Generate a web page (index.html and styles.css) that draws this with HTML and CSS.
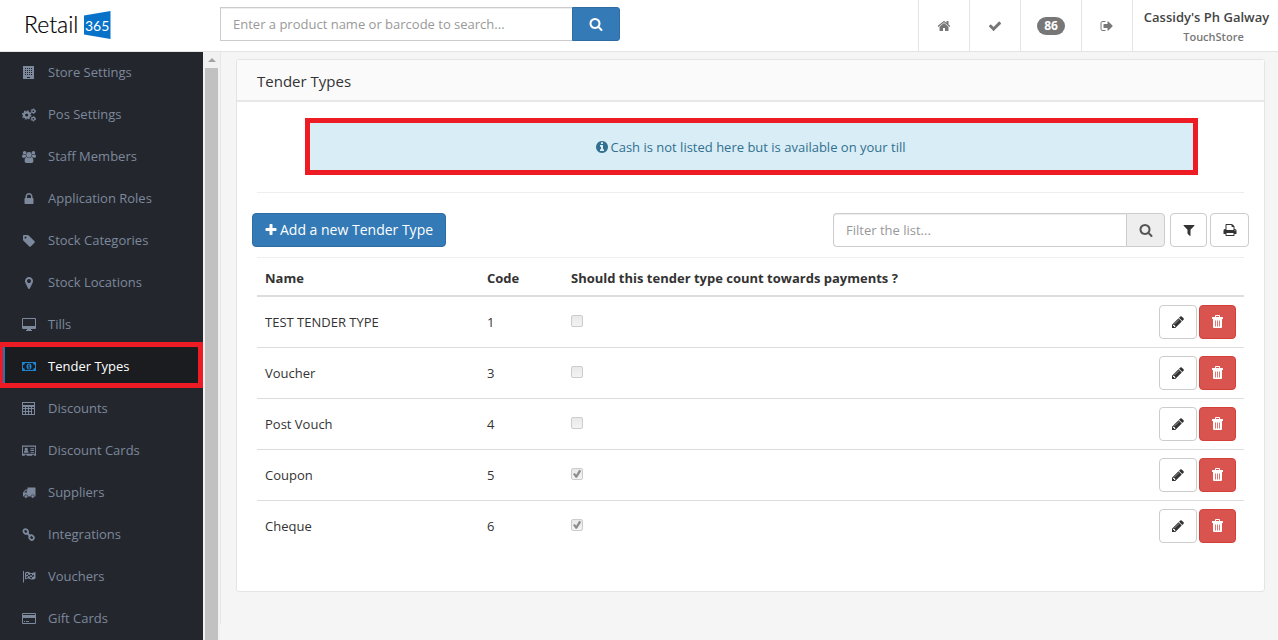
FILE: index.html
```html
<!DOCTYPE html>
<html lang="en">
<head>
<meta charset="utf-8">
<meta name="viewport" content="width=device-width, initial-scale=1">
<title>Tender Types</title>
<link rel="stylesheet" href="styles.css">
</head>
<body>
<svg class="sprite" aria-hidden="true">
  <symbol id="search" viewBox="0 0 1792 1792"><path d="M1216 832q0-185-131.5-316.5t-316.5-131.5-316.5 131.5-131.5 316.5 131.5 316.5 316.5 131.5 316.5-131.5 131.5-316.5zm512 832q0 52-38 90t-90 38q-54 0-90-38l-343-342q-179 124-399 124-143 0-273.5-55.5t-225-150-150-225-55.5-273.5 55.5-273.5 150-225 225-150 273.5-55.5 273.5 55.5 225 150 150 225 55.5 273.5q0 220-124 399l343 343q37 37 37 90z"/></symbol>
  <symbol id="home" viewBox="0 0 1792 1792"><path d="M1472 992v480q0 26-19 45t-45 19h-384v-384h-256v384h-384q-26 0-45-19t-19-45v-480q0-1 .5-3t.5-3l575-474 575 474q1 2 1 6zm223-69l-62 74q-8 9-21 11h-3q-13 0-21-7l-692-577-692 577q-12 8-24 7-13-2-21-11l-62-74q-8-10-7-23.5t11-21.5l719-599q32-26 76-26t76 26l244 204v-195q0-14 9-23t23-9h192q14 0 23 9t9 23v408l219 182q10 8 11 21.5t-7 23.5z"/></symbol>
  <symbol id="check" viewBox="0 0 1792 1792"><path d="M1671 566q0 40-28 68l-724 724-136 136q-28 28-68 28t-68-28l-136-136-362-362q-28-28-28-68t28-68l136-136q28-28 68-28t68 28l294 295 656-657q28-28 68-28t68 28l136 136q28 28 28 68z"/></symbol>
  <symbol id="signout" viewBox="0 0 1792 1792"><path d="M704 1440q0 4 1 20t.5 26.500-3 23.500-10 19.500-20.500 6.500h-320q-119 0-203.500-84.500t-84.500-203.500v-704q0-119 84.500-203.500t203.500-84.500h320q13 0 22.500 9.500t9.500 22.500q0 4 1 20t.5 26.500-3 23.500-10 19.500-20.500 6.500h-320q-66 0-113 47t-47 113v704q0 66 47 113t113 47h312l11.500 1 11.500 3 8 5.500 7 9 2 13.500zm928-544q0 26-19 45l-544 544q-19 19-45 19t-45-19-19-45v-288h-448q-26 0-45-19t-19-45v-384q0-26 19-45t45-19h448v-288q0-26 19-45t45-19 45 19l544 544q19 19 19 45z"/></symbol>
  <symbol id="plus" viewBox="0 0 1792 1792"><path d="M1600 736v192q0 40-28 68t-68 28h-416v416q0 40-28 68t-68 28h-192q-40 0-68-28t-28-68v-416h-416q-40 0-68-28t-28-68v-192q0-40 28-68t68-28h416v-416q0-40 28-68t68-28h192q40 0 68 28t28 68v416h416q40 0 68 28t28 68z"/></symbol>
  <symbol id="filter" viewBox="0 0 1792 1792"><path d="M1595 295q17 41-14 70l-493 493v742q0 42-39 59-13 5-25 5-27 0-45-19l-256-256q-19-19-19-45v-486l-493-493q-31-29-14-70 17-39 59-39h1280q42 0 59 39z"/></symbol>
  <symbol id="print" viewBox="0 0 1792 1792"><path d="M448 1536h896v-256h-896v256zm0-640h896v-384h-160q-40 0-68-28t-28-68v-160h-640v640zm1152 64q0-26-19-45t-45-19-45 19-19 45 19 45 45 19 45-19 19-45zm128 0v416q0 13-9.500 22.500t-22.500 9.500h-224v160q0 40-28 68t-68 28h-960q-40 0-68-28t-28-68v-160h-224q-13 0-22.500-9.500t-9.500-22.500v-416q0-79 56.500-135.500t135.500-56.500h64v-544q0-40 28-68t68-28h672q40 0 88 20t76 48l152 152q28 28 48 76t20 88v256h64q79 0 135.500 56.500t56.500 135.500z"/></symbol>
  <symbol id="pencil" viewBox="0 0 1792 1792"><path d="M491 1536l91-91-235-235-91 91v107h128v128h107zm523-928q0-22-22-22-10 0-17 7l-542 542q-7 7-7 17 0 22 22 22 10 0 17-7l542-542q7-7 7-17zm-54-192l416 416-832 832h-416v-416zm683 96q0 53-37 90l-166 166-416-416 166-165q36-38 90-38 53 0 91 38l235 234q37 39 37 91z"/></symbol>
  <symbol id="trash" viewBox="0 0 14 14"><path fill-rule="evenodd" d="M4 2V1q0-1 1-1h3q1 0 1 1v1h2.500q.5 0 .5.500V4H1V2.500Q1 2 1.500 2zM5 2h3V1H5zM2 4h9v8q0 1-1 1H3q-1 0-1-1zM4 5.500v6h.8v-6zm2.100 0v6h.8v-6zm2.100 0v6H9v-6z"/></symbol>
  <symbol id="info" viewBox="0 0 1792 1792"><path d="M1152 1376v-160q0-14-9-23t-23-9h-96v-512q0-14-9-23t-23-9h-320q-14 0-23 9t-9 23v160q0 14 9 23t23 9h96v320h-96q-14 0-23 9t-9 23v160q0 14 9 23t23 9h448q14 0 23-9t9-23zm-128-896v-160q0-14-9-23t-23-9h-192q-14 0-23 9t-9 23v160q0 14 9 23t23 9h192q14 0 23-9t9-23zm640 416q0 209-103 385.500t-279.500 279.500-385.500 103-385.500-103-279.500-279.500-103-385.500 103-385.500 279.500-279.500 385.500-103 385.500 103 279.500 279.500 103 385.500z"/></symbol>
  <symbol id="lock" viewBox="0 0 1792 1792"><path d="M640 768h512v-192q0-106-75-181t-181-75-181 75-75 181v192zm832 96v576q0 40-28 68t-68 28h-960q-40 0-68-28t-28-68v-576q0-40 28-68t68-28h32v-192q0-184 132-316t316-132 316 132 132 316v192h32q40 0 68 28t28 68z"/></symbol>
  <symbol id="tag" viewBox="0 0 1792 1792"><path d="M576 448q0-53-37.500-90.500t-90.500-37.500-90.500 37.500-37.500 90.500 37.500 90.500 90.500 37.500 90.500-37.500 37.500-90.500zm1067 576q0 53-37 90l-491 492q-39 37-91 37-53 0-90-37l-715-716q-38-37-64.500-101t-26.500-117v-416q0-52 38-90t90-38h416q53 0 117 26.500t102 64.500l715 714q37 39 37 91z"/></symbol>
  <symbol id="marker" viewBox="0 0 1792 1792"><path d="M1152 640q0-106-75-181t-181-75-181 75-75 181 75 181 181 75 181-75 75-181zm256 0q0 109-33 179l-364 774q-16 33-47.500 52t-67.500 19-67.500-19-46.500-52l-365-774q-33-70-33-179 0-212 150-362t362-150 362 150 150 362z"/></symbol>
  <symbol id="building" viewBox="0 0 14 14"><path fill-rule="evenodd" d="M1 0h11v13H1zM3 2v1h1V2zm2 0v1h1V2zm2 0v1h1V2zm2 0v1h1V2zM3 4v1h1V4zm2 0v1h1V4zm2 0v1h1V4zm2 0v1h1V4zM3 6v1h1V6zm2 0v1h1V6zm2 0v1h1V6zm2 0v1h1V6zM3 8v1h1V8zm2 0v1h1V8zm2 0v1h1V8zm2 0v1h1V8zM5 11v1h3v-1z"/></symbol>
  <symbol id="cogs" viewBox="0 0 14 14"><g fill="none" stroke="currentColor"><circle cx="4.700" cy="7" r="2.700" stroke-width="2.200"/><circle cx="4.700" cy="7" r="4.100" stroke-width="1.300" stroke-dasharray="1.610 1.610"/><circle cx="11.300" cy="3.200" r="1.500" stroke-width="1.300"/><circle cx="11.300" cy="3.200" r="2.300" stroke-width="1" stroke-dasharray="1.200 1.200"/><circle cx="11.300" cy="10.800" r="1.500" stroke-width="1.300"/><circle cx="11.300" cy="10.800" r="2.300" stroke-width="1" stroke-dasharray="1.200 1.200"/></g></symbol>
  <symbol id="users" viewBox="0 0 14 14"><circle cx="7" cy="4.700" r="2.700"/><circle cx="2.600" cy="2.700" r="1.800"/><circle cx="11.400" cy="2.700" r="1.800"/><path d="M4.600 7q2.400 1.700 4.800 0 2 .3 2 4 0 2-1.700 2H4.300q-1.700 0-1.700-2 0-3.700 2-4zM1 4.300q1.500 1 2.800.3 0 1.300.7 2.200-1.400 0-2 .9H1.300Q0 7.700 0 6.500t1-2.200zM13 4.300q-1.500 1-2.800.3 0 1.300-.7 2.200 1.400 0 2 .9h1.200q1.300 0 1.300-1.200t-1-2.200z"/></symbol>
  <symbol id="desktop" viewBox="0 0 14 14"><path fill-rule="evenodd" d="M1 0h12q1 0 1 1v9q0 1-1 1H9v1h1v1H4v-1h1v-1H1q-1 0-1-1V1q0-1 1-1zm0 1v7h12V1z"/></symbol>
  <symbol id="money" viewBox="0 0 14 14"><path fill-rule="evenodd" d="M0 2h14v9H0zM3 3Q2.800 4.800 1 5v3q1.800.2 2 2h8q.2-1.800 2-2V5q-1.800-.2-2-2z"/><path fill-rule="evenodd" d="M7 3.500a2.500 3 0 0 1 0 6a2.500 3 0 0 1 0-6zM6 5v.8h.6v1.900H6v.8h2v-.8h-.5V4.600H7z"/></symbol>
  <symbol id="calculator" viewBox="0 0 14 14"><path fill-rule="evenodd" d="M0 0h13v13H0zm1 1v2h11V1zm0 4v1h2V5zm3 0v1h2V5zm3 0v1h2V5zm3 0v1h2V5zM1 7v2h2V7zm3 0v2h2V7zm3 0v2h2V7zm-6 3v2h2v-2zm3 0v2h2v-2zm3 0v2h2v-2zm3-3v5h2V7z"/></symbol>
  <symbol id="idcard" viewBox="0 0 15 14"><path fill-rule="evenodd" d="M0 1h15v11h-2v-1h-2v1H5v-1H3v1H0zm1 1.500V10h13V2.500z"/><circle cx="4.500" cy="5" r="1.600"/><path d="M2 9q0-2.700 1.500-2.700h2Q7 6.300 7 9zM9 4h4v1H9zM9 6h4v1H9zM9 8h4v1H9z"/></symbol>
  <symbol id="truck" viewBox="0 0 14 14"><path fill-rule="evenodd" d="M5.500 1.500H13q.5 0 .5.500v8.500h-12q-.5 0-.5-.5V6.500l2.500-3h2zM2.200 6.500h2.600v-2H3.900z"/><circle cx="4" cy="10.500" r="1.700" stroke="#24262d" stroke-width=".6"/><circle cx="10.700" cy="10.500" r="1.700" stroke="#24262d" stroke-width=".6"/></symbol>
  <symbol id="link" viewBox="0 0 14 14"><g fill="none" stroke="currentColor" stroke-width="1.800"><rect x="1.300" y="1.500" width="5" height="4" rx="2" transform="rotate(45 3.800 3.500)"/><rect x="7" y="7.500" width="5" height="4" rx="2" transform="rotate(45 9.500 9.500)"/><path d="M4.500 4.500l4.200 4"/></g></symbol>
  <symbol id="flag" viewBox="0 0 14 14"><path fill-rule="evenodd" d="M1 1h1v11.500H1zM3 2.700q2.500-1.700 5 0 2 1 5.500-.8v6.500q-3 2-5.500.7-2-1.200-5 .4zM4 3.500V5q1-.6 2-.6V2.900q-1 0-2 .6zm4 .3v1.500q-1-.7-2-.9V6q1 0 2 .7V5.300q1 .3 2 .1v1.500q-1 .2-2-.2v1.400q1.200.5 2 .3V6.900q1-.1 2-.6V4.800q-1 .5-2 .6V4q-1 .2-2-.2zM4 6.500V8q1-.4 2-.4V6q-1 0-2 .5z"/></symbol>
  <symbol id="card" viewBox="0 0 14 14"><path fill-rule="evenodd" d="M1 1h12q1 0 1 1v9q0 1-1 1H1q-1 0-1-1V2q0-1 1-1zm0 1v1h12V2zm0 4v5h12V6zm1 3h1v1H2zm2 0h3v1H4z"/></symbol>
</svg>

<header class="topbar">
  <a class="brand" href="#" aria-label="Retail 365">
    <svg width="90" height="32" viewBox="0 0 90 32" role="img" aria-hidden="true">
      <text class="brand-name" x="0" y="25">Retail</text>
      <path fill="#0872c9" d="M60 7.500L86.500 3v28L60 26.500z"/>
      <text class="brand-num" x="61" y="23">365</text>
    </svg>
  </a>
  <form class="search">
    <input class="search-input" type="text" aria-label="Search products" placeholder="Enter a product name or barcode to search...">
    <button class="search-btn" type="button" aria-label="Search"><svg class="icon"><use href="#search"/></svg></button>
  </form>
  <nav class="tools" aria-label="Account">
    <a class="tool" href="#" aria-label="Home"><svg class="icon"><use href="#home"/></svg></a>
    <a class="tool" href="#" aria-label="Tasks"><svg class="icon"><use href="#check"/></svg></a>
    <a class="tool" href="#"><span class="badge">86</span></a>
    <a class="tool" href="#" aria-label="Sign out"><svg class="icon"><use href="#signout"/></svg></a>
    <div class="user"><span class="user-name">Cassidy's Ph Galway</span><span class="user-store">TouchStore</span></div>
  </nav>
</header>

<div class="shell">
  <nav class="sidebar" aria-label="Settings">
    <a class="item" href="#"><svg class="icon"><use href="#building"/></svg>Store Settings</a>
    <a class="item" href="#"><svg class="icon"><use href="#cogs"/></svg>Pos Settings</a>
    <a class="item" href="#"><svg class="icon"><use href="#users"/></svg>Staff Members</a>
    <a class="item" href="#"><svg class="icon"><use href="#lock"/></svg>Application Roles</a>
    <a class="item" href="#"><svg class="icon"><use href="#tag"/></svg>Stock Categories</a>
    <a class="item" href="#"><svg class="icon"><use href="#marker"/></svg>Stock Locations</a>
    <a class="item" href="#"><svg class="icon"><use href="#desktop"/></svg>Tills</a>
    <a class="item active" href="#" aria-current="page"><svg class="icon"><use href="#money"/></svg>Tender Types</a>
    <a class="item" href="#"><svg class="icon"><use href="#calculator"/></svg>Discounts</a>
    <a class="item" href="#"><svg class="icon"><use href="#idcard"/></svg>Discount Cards</a>
    <a class="item" href="#"><svg class="icon"><use href="#truck"/></svg>Suppliers</a>
    <a class="item" href="#"><svg class="icon"><use href="#link"/></svg>Integrations</a>
    <a class="item" href="#"><svg class="icon"><use href="#flag"/></svg>Vouchers</a>
    <a class="item" href="#"><svg class="icon"><use href="#card"/></svg>Gift Cards</a>
  </nav>
  <div class="scroller" aria-hidden="true"><span class="arrow"></span><span class="thumb"></span></div>
  <div class="divider"></div>

  <main class="main">
    <section class="panel">
      <h1 class="panel-title">Tender Types</h1>
      <div class="panel-body">
        <div class="notice"><svg class="icon"><use href="#info"/></svg><span>Cash is not listed here but is available on your till</span></div>
        <div class="toolbar">
          <button class="btn primary" type="button"><svg class="icon"><use href="#plus"/></svg>Add a new Tender Type</button>
          <div class="filters">
            <div class="filter-group">
              <input class="filter-input" type="text" aria-label="Filter the list" placeholder="Filter the list...">
              <button class="addon" type="button" aria-label="Search list"><svg class="icon"><use href="#search"/></svg></button>
            </div>
            <button class="btn filter-btn" type="button" aria-label="Filter"><svg class="icon"><use href="#filter"/></svg></button>
            <button class="btn print-btn" type="button" aria-label="Print"><svg class="icon"><use href="#print"/></svg></button>
          </div>
        </div>
        <table class="list">
          <thead>
            <tr><th class="col-name">Name</th><th class="col-code">Code</th><th>Should this tender type count towards payments ?</th><th class="col-actions"></th></tr>
          </thead>
          <tbody>
            <tr><td>TEST TENDER TYPE</td><td>1</td><td><input class="tick" type="checkbox" disabled aria-label="Counts towards payments"></td><td class="actions"><button class="btn edit" type="button" aria-label="Edit"><svg class="icon"><use href="#pencil"/></svg></button><button class="btn danger" type="button" aria-label="Delete"><svg class="icon"><use href="#trash"/></svg></button></td></tr>
            <tr><td>Voucher</td><td>3</td><td><input class="tick" type="checkbox" disabled aria-label="Counts towards payments"></td><td class="actions"><button class="btn edit" type="button" aria-label="Edit"><svg class="icon"><use href="#pencil"/></svg></button><button class="btn danger" type="button" aria-label="Delete"><svg class="icon"><use href="#trash"/></svg></button></td></tr>
            <tr><td>Post Vouch</td><td>4</td><td><input class="tick" type="checkbox" disabled aria-label="Counts towards payments"></td><td class="actions"><button class="btn edit" type="button" aria-label="Edit"><svg class="icon"><use href="#pencil"/></svg></button><button class="btn danger" type="button" aria-label="Delete"><svg class="icon"><use href="#trash"/></svg></button></td></tr>
            <tr><td>Coupon</td><td>5</td><td><input class="tick" type="checkbox" checked disabled aria-label="Counts towards payments"></td><td class="actions"><button class="btn edit" type="button" aria-label="Edit"><svg class="icon"><use href="#pencil"/></svg></button><button class="btn danger" type="button" aria-label="Delete"><svg class="icon"><use href="#trash"/></svg></button></td></tr>
            <tr><td>Cheque</td><td>6</td><td><input class="tick" type="checkbox" checked disabled aria-label="Counts towards payments"></td><td class="actions"><button class="btn edit" type="button" aria-label="Edit"><svg class="icon"><use href="#pencil"/></svg></button><button class="btn danger" type="button" aria-label="Delete"><svg class="icon"><use href="#trash"/></svg></button></td></tr>
          </tbody>
        </table>
      </div>
    </section>
  </main>
</div>
</body>
</html>
```

FILE: styles.css
```css
* { box-sizing: border-box; }

body {
  margin: 0;
  height: 100vh;
  display: flex;
  flex-direction: column;
  overflow: hidden;
  background: #f5f5f5;
  color: #333;
  font: 13px/20px "Open Sans", "Noto Sans", sans-serif;
}

input, button { font: inherit; }
a { text-decoration: none; color: inherit; }
.sprite { position: absolute; width: 0; height: 0; }
.icon { width: 14px; height: 14px; flex: none; fill: currentColor; }

/* Top bar */
.topbar {
  display: flex;
  flex: none;
  background: #fff;
  border-bottom: 1px solid #e4e4e4;
}
.brand { flex: none; width: 220px; padding: 8px 0 0 24px; height: 51px; }
.brand svg { display: block; }
.brand-name { font: 300 23px Lato, sans-serif; fill: #000; stroke: #000; stroke-width: 0.2px; }
.brand-num { font: 400 14px Lato, sans-serif; fill: #fff; }
.search { display: flex; width: 400px; height: 34px; margin-top: 7px; }
.search-input, .filter-input {
  flex: 1;
  min-width: 0;
  padding: 6px 12px;
  border: 1px solid #ccc;
  background: #fff;
  box-shadow: inset 0 1px 1px rgba(0, 0, 0, 0.075);
  color: #555;
}
.search-input { border-right: 0; }
.search-input::placeholder, .filter-input::placeholder { color: #999; opacity: 1; }
.search-btn {
  display: flex;
  align-items: center;
  justify-content: center;
  width: 48px;
  padding: 0;
  border: 1px solid #2e6da4;
  border-radius: 0 3px 3px 0;
  background: #337ab7;
  color: #fff;
}
.tools { display: flex; margin-left: auto; }
.tool {
  display: flex;
  align-items: center;
  padding: 0 18px;
  border-left: 1px solid #e4e4e4;
  color: #777;
}
.tool:has(.badge) { padding: 0 16px; }
.badge {
  width: 28px;
  border-radius: 9px;
  background: #777;
  color: #fff;
  font-size: 12px;
  font-weight: 700;
  line-height: 18px;
  text-align: center;
}
.user {
  display: flex;
  flex-direction: column;
  align-items: center;
  width: 146px;
  padding: 7px 0 0 2px;
  border-left: 1px solid #e4e4e4;
  font-weight: 600;
}
.user-name { color: #444; }
.user-store { padding-left: 14px; color: #777; font-size: 11px; }

/* Body */
.shell { display: flex; flex: 1; min-height: 0; }
.sidebar { flex: none; width: 203px; background: #24262d; }
.item {
  display: flex;
  align-items: flex-start;
  gap: 12px;
  height: 42px;
  padding: 10px 22px;
  color: #7c899c;
}
.item .icon { margin-top: 4px; }
.item.active {
  position: relative;
  padding-left: 17px;
  border-left: 5px solid #1c75b5;
  background: #1a1c20;
  color: #fff;
}
.item.active .icon { color: #1c84d0; }
.item.active::after {
  content: "";
  position: absolute;
  inset: -4px 0 0 -5px;
  border: 5px solid #ed1c24;
  border-left-width: 3px;
}
.scroller {
  display: flex;
  flex-direction: column;
  align-items: center;
  flex: none;
  width: 17px;
  background: #f1f1f1;
}
.arrow {
  margin: 6px 0;
  border: 4px solid transparent;
  border-top: 0;
  border-bottom-color: #a3a3a3;
}
.thumb { flex: 1; width: 13px; background: #c1c1c1; }
.divider { flex: none; width: 1px; margin-bottom: 16px; background: #e7e7e7; }

/* Panel */
.main { flex: 1; min-width: 0; padding: 7px 13px 0 15px; }
.panel { background: #fff; border: 1px solid #e4e4e4; border-radius: 3px; }
.panel-title {
  margin: 0;
  padding: 11px 20px 9px;
  border-bottom: 2px solid #e7e7e7;
  background: #fafafa;
  font-size: 15px;
  font-weight: 400;
  line-height: 20px;
}
.panel-body { padding: 16px 20px 39px; }
.notice {
  display: flex;
  align-items: center;
  justify-content: center;
  gap: 2px;
  height: 57px;
  margin: 0 46px 17px 48px;
  padding-right: 3px;
  border: 5px solid #ed1c24;
  background: #d9edf7;
  color: #31708f;
}
.toolbar {
  display: flex;
  justify-content: space-between;
  padding: 20px 0 10px;
  border-top: 1px solid #eee;
  border-bottom: 1px solid #eee;
}
.btn {
  display: flex;
  align-items: center;
  justify-content: center;
  height: 34px;
  padding: 0;
  border: 1px solid #ccc;
  border-radius: 4px;
  background: #fff;
  color: #333;
}
.primary {
  gap: 2px;
  margin-left: -5px;
  padding: 0 12px 0 11px;
  border-color: #2e6da4;
  background: #337ab7;
  color: #fff;
  font-size: 14px;
}
.filters { display: flex; width: 416px; margin-right: -5px; }
.filter-group { display: flex; flex: 1; }
.filter-input { border-right: 0; border-radius: 4px 0 0 4px; }
.addon {
  display: flex;
  align-items: center;
  justify-content: center;
  width: 39px;
  padding: 0;
  border: 1px solid #ccc;
  border-radius: 0 4px 4px 0;
  background: #eee;
  color: #555;
}
.filter-btn { width: 37px; margin: 0 3px 0 5px; }
.print-btn { width: 39px; }

.list { width: 100%; table-layout: fixed; border-collapse: separate; border-spacing: 0; }
.list th { padding: 10px 8px 7px; border-bottom: 2px solid #ddd; text-align: left; font-weight: 700; }
.list td { height: 51px; padding: 8px; border-bottom: 1px solid #ddd; }
.list tbody tr:last-child td { border-bottom-color: transparent; }
.col-name { width: 222px; }
.col-code { width: 84px; }
.col-actions { width: 96px; }
.actions { display: flex; justify-content: flex-end; gap: 2px; }
.edit { width: 38px; }
.danger { width: 37px; border-color: #d43f3a; background: #d9534f; color: #fff; }
.tick {
  display: block;
  appearance: none;
  width: 12px;
  height: 12px;
  margin: 0 0 2px;
  border: 1px solid #ccc;
  border-radius: 2px;
  background: linear-gradient(#e9e9e9, #f3f3f3);
}
.tick:checked::before {
  content: "";
  display: block;
  width: 10px;
  height: 10px;
  background: #8c8c8c;
  clip-path: polygon(10% 50%, 27% 40%, 42% 58%, 72% 8%, 92% 20%, 50% 88%, 36% 88%);
}
```
